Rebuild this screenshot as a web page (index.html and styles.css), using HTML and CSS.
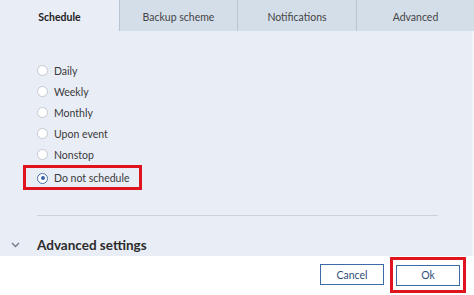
FILE: index.html
```html
<!DOCTYPE html>
<html>
<head>
<meta charset="utf-8">
<link rel="stylesheet" href="styles.css">
</head>
<body>
<div class="dialog">
  <div class="tabs">
    <div class="tab active">Schedule</div>
    <div class="tab">Backup scheme</div>
    <div class="tab">Notifications</div>
    <div class="tab">Advanced</div>
  </div>
  <div class="content">
    <div class="options">
      <div class="opt"><span class="radio"></span><span>Daily</span></div>
      <div class="opt"><span class="radio"></span><span>Weekly</span></div>
      <div class="opt"><span class="radio"></span><span>Monthly</span></div>
      <div class="opt"><span class="radio"></span><span>Upon event</span></div>
      <div class="opt"><span class="radio"></span><span>Nonstop</span></div>
      <div class="opt highlighted"><span class="radio checked"></span><span>Do not schedule</span></div>
    </div>
    <div class="divider"></div>
    <div class="advanced">
      <svg class="chev" width="9" height="6" viewBox="0 0 9 6"><path d="M1 1 L4.5 4.5 L8 1" fill="none" stroke="#6b7785" stroke-width="1.3"/></svg>
      <span>Advanced settings</span>
    </div>
  </div>
  <div class="footer">
    <button class="btn">Cancel</button>
    <div class="okwrap"><button class="btn">Ok</button></div>
  </div>
</div>
</body>
</html>
```
FILE: styles.css
```css
html, body {
  margin: 0;
  padding: 0;
  background: #ffffff;
}
body {
  font-family: Lato, "Open Sans", sans-serif;
  color: #333;
}
.dialog {
  width: 474px;
  height: 295px;
  display: flex;
  flex-direction: column;
}
.tabs {
  display: grid;
  grid-template-columns: 119px 118px 119px 118px;
  height: 31px;
}
.tab {
  display: flex;
  align-items: center;
  justify-content: center;
  background: #d4dee9;
  border-left: 1px solid #b9c5d2;
  font-size: 10.5px;
  color: #444;
  padding-top: 3px;
  box-sizing: border-box;
}
.tab.active {
  background: #e9edf6;
  border-left: none;
  font-weight: 700;
  color: #222;
}
.content {
  background: #e9edf6;
  height: 225px;
  box-sizing: border-box;
  padding-top: 29px;
  border-right: 2px solid #f2f4f9;
}
.options {
  display: flex;
  flex-direction: column;
  padding-left: 37px;
}
.opt {
  display: flex;
  align-items: center;
  height: 21px;
  font-size: 10.5px;
  color: #3a3a3a;
}
.opt .radio {
  width: 9px;
  height: 9px;
  border: 1px solid #c4c9d0;
  border-radius: 50%;
  background: #fff;
  margin-right: 6px;
  box-sizing: content-box;
  position: relative;
}
.radio.checked {
  border-color: #4a6fa5;
}
.radio.checked::after {
  content: "";
  position: absolute;
  left: 2.5px;
  top: 2.5px;
  width: 4px;
  height: 4px;
  border-radius: 50%;
  background: #3a66a8;
}
.opt.highlighted {
  align-self: flex-start;
  margin-left: -14px;
  width: 119px;
  height: 25px;
  border: 3px solid #e0141e;
  box-sizing: border-box;
  padding-left: 11px;
  padding-top: 1px;
}
.divider {
  margin: 25px 34px 0 37px;
  height: 1px;
  background: #cdd1d8;
}
.advanced {
  display: flex;
  align-items: center;
  margin-top: 21px;
  font-size: 13.5px;
  font-weight: 700;
  color: #2b2b2b;
}
.chev {
  margin-left: 11px;
  margin-right: 17px;
}
.footer {
  flex: 1;
  background: #fff;
  display: flex;
  align-items: flex-start;
  justify-content: flex-end;
  padding-top: 1px;
  padding-right: 8px;
}
.btn {
  width: 64px;
  height: 21px;
  border: 1.5px solid #3b6aa6;
  background: #fff;
  font-family: Lato, "Open Sans", sans-serif;
  font-size: 10.5px;
  color: #2f4f7a;
  padding: 0;
  margin-top: 7px;
}
.okwrap {
  margin-left: 6px;
  border: 3px solid #e0141e;
  padding: 3px 3px 4px 3px;
}
.okwrap .btn {
  margin-top: 0;
  width: 64px;
}
```
